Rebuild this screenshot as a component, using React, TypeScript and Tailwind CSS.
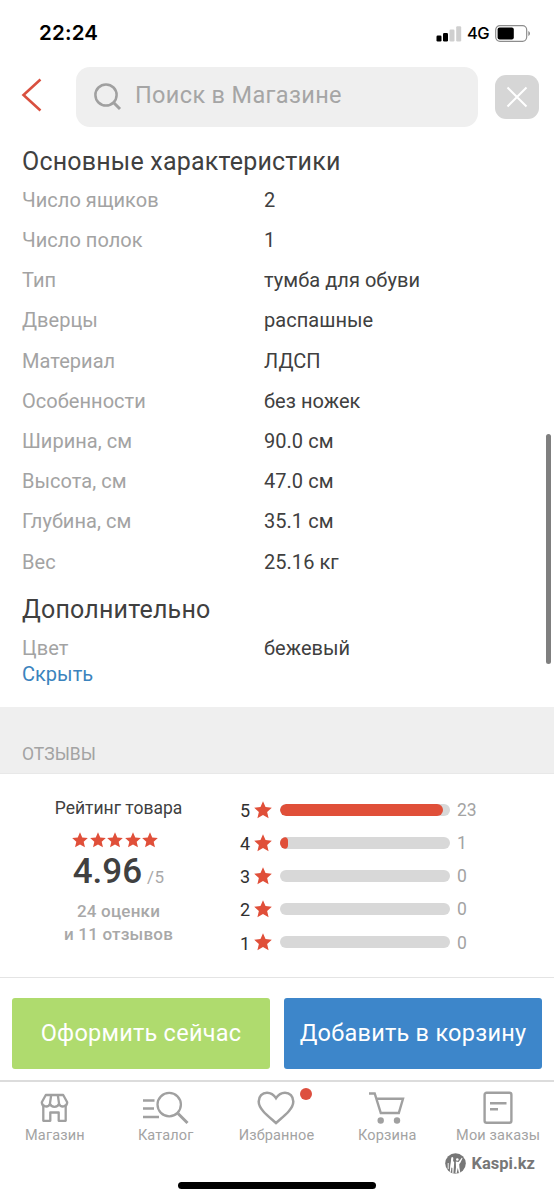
import React from "react";

const specs: [string, string][] = [
  ["Число ящиков", "2"],
  ["Число полок", "1"],
  ["Тип", "тумба для обуви"],
  ["Дверцы", "распашные"],
  ["Материал", "ЛДСП"],
  ["Особенности", "без ножек"],
  ["Ширина, см", "90.0 см"],
  ["Высота, см", "47.0 см"],
  ["Глубина, см", "35.1 см"],
  ["Вес", "25.16 кг"],
];

const ratings = [
  { stars: 5, count: 23, percent: 95.8 },
  { stars: 4, count: 1, percent: 4.8 },
  { stars: 3, count: 0, percent: 0 },
  { stars: 2, count: 0, percent: 0 },
  { stars: 1, count: 0, percent: 0 },
];

function Star({ className }: { className: string }) {
  return (
    <svg viewBox="0 0 20 20" className={className} fill="#e04f39">
      <path d="M10 0.400 12.800 6.800 19.800 7.500 14.600 12.100 16.200 19.200 10 15.500 3.800 19.200 5.400 12.100 0.200 7.500 7.200 6.800Z" />
    </svg>
  );
}

function StatusBar() {
  return (
    <div className="flex h-[67px] shrink-0 items-center justify-between pr-[23px] pl-[39px]">
      <span className="font-['Inter',sans-serif] text-[20.5px] font-semibold tracking-[0.2px] text-black">22:24</span>
      <div className="flex items-center">
        <svg width="26" height="16" viewBox="0 0 26 16">
          <rect x="0.5" y="9.5" width="5" height="6" rx="1.2" fill="#000" />
          <rect x="7" y="7" width="5" height="8.500" rx="1.2" fill="#000" />
          <rect x="13.500" y="3.500" width="5" height="12" rx="1.2" fill="#cfcfcf" />
          <rect x="20.200" y="0.300" width="5" height="15.200" rx="1.2" fill="#cfcfcf" />
        </svg>
        <span className="ml-[5px] w-[28px] font-['Inter',sans-serif] text-[16.5px] font-medium tracking-[-0.5px] text-black">4G</span>
        <svg width="36" height="17" viewBox="0 0 36 17">
          <rect x="0.700" y="0.700" width="31" height="15.600" rx="4.200" fill="none" stroke="#8d8d8d" strokeWidth="1.200" />
          <rect x="2.600" y="2.600" width="16.200" height="11.800" rx="2" fill="#000" />
          <path d="M33.300 6v5c1-.4 1.700-1.400 1.700-2.500s-.7-2.100-1.700-2.500Z" fill="#8d8d8d" />
        </svg>
      </div>
    </div>
  );
}

function SearchHeader() {
  return (
    <div className="flex h-[60px] shrink-0 items-center pr-[15px] pl-[21px]">
      <svg width="21" height="34" viewBox="0 0 21 34" fill="none" stroke="#d9503f" strokeWidth="2.600" className="-mt-[4px]">
        <path d="M19.500 1.500 2.500 17 19.500 32.500" />
      </svg>
      <div className="ml-[34px] flex h-[60px] w-[403px] items-center rounded-[14px] bg-[#efefef] pl-[18px]">
        <svg width="28" height="28" viewBox="0 0 28 28" fill="none" stroke="#a0a0a0" strokeWidth="2.500">
          <circle cx="12" cy="12" r="10.600" />
          <path d="M19.500 19.500 26 26" strokeWidth="3" />
        </svg>
        <span className="-mt-[2px] ml-[13px] text-[23.5px] tracking-[0.35px] whitespace-nowrap text-[#a5a5a5]">Поиск в Магазине</span>
      </div>
      <div className="ml-[17px] flex size-[44px] items-center justify-center rounded-[11px] bg-[#d6d6d6]">
        <svg width="22" height="22" viewBox="0 0 22 22" stroke="#fff" strokeWidth="2">
          <path d="M1.500 1.500 20.500 20.500M20.500 1.500 1.500 20.500" />
        </svg>
      </div>
    </div>
  );
}

function SpecRow({ name, value }: { name: string; value: string }) {
  return (
    <div className="flex h-[40.2px] items-center text-[20px] tracking-[0.04px] whitespace-nowrap">
      <span className="w-[242px] text-[#a3a3a3]">{name}</span>
      <span className="text-[#404040]">{value}</span>
    </div>
  );
}

function Specs() {
  return (
    <section className="flex h-[580px] shrink-0 flex-col pl-[22px] text-[#404040]">
      <h2 className="mt-[17px] h-[36px] text-[25px] leading-[36px] tracking-[0.2px] whitespace-nowrap">Основные характеристики</h2>
      <div className="-mt-[0.2px]">
        {specs.map(([name, value]) => (
          <SpecRow key={name} name={name} value={value} />
        ))}
      </div>
      <h2 className="mt-[10px] h-[36px] text-[25px] leading-[36px] tracking-[0.2px] whitespace-nowrap">Дополнительно</h2>
      <div>
        <SpecRow name="Цвет" value="бежевый" />
      </div>
      <a className="-mt-[7px] text-[20px] leading-[26px] tracking-[0.02px] text-[#3b83bd]">Скрыть</a>
    </section>
  );
}

function Reviews() {
  return (
    <section className="flex h-[204px] shrink-0 border-b border-[#e4e4e4]">
      <div className="flex w-[237px] flex-col items-center">
        <div className="mt-[22px] text-[17.5px] leading-[24px] whitespace-nowrap text-[#404040]">Рейтинг товара</div>
        <div className="mt-[12px] -ml-[7px] flex gap-[1.500px]">
          {[0, 1, 2, 3, 4].map((i) => (
            <Star key={i} className="size-[16px]" />
          ))}
        </div>
        <div className="mt-[4px] flex items-baseline leading-[40px] whitespace-nowrap">
          <span className="text-[35px] font-medium text-[#404040]">4.96</span>
          <span className="ml-[5px] text-[17px] tracking-[0.3px] text-[#a8a8a8]">/5</span>
        </div>
        <div className="mt-[3px] text-center text-[17px] leading-[23px] font-medium tracking-[0.2px] whitespace-nowrap text-[#a8a8a8]">
          24 оценки
          <br />и 11 отзывов
        </div>
      </div>
      <div className="mt-[19px] ml-[3px]">
        {ratings.map(({ stars, count, percent }) => (
          <div key={stars} className="flex h-[33.15px] items-center text-[18px]">
            <span className="mt-[2px] w-[14px] text-[#303030]">{stars}</span>
            <Star className="size-[18px]" />
            <div className="ml-[8px] h-[12px] w-[170px] overflow-hidden rounded-full bg-[#d8d8d8]">
              {percent > 0 && <div className="h-full rounded-full bg-[#e04f39]" style={{ width: `${percent}%` }} />}
            </div>
            <span className="mt-px ml-[7px] text-[17.5px] text-[#a3a3a3]">{count}</span>
          </div>
        ))}
      </div>
    </section>
  );
}

function StoreIcon() {
  return (
    <svg width="29" height="30" viewBox="0 0 29 30" fill="none" stroke="#a0a0a0" strokeWidth="2.300" strokeLinejoin="round">
      <path d="M5.800 2h17.400l4 7.300c0 5-6.700 5.500-8.100 1.500-1.600 4-7.600 4-9.200 0-1.400 4-8.100 3.500-8.100-1.500ZM11.200 2 9.900 10.800M17.800 2 19.100 10.800" />
      <path d="M3.300 13v14.800h7v-8.300h8.400v8.300h7V13" />
    </svg>
  );
}

function CatalogIcon() {
  return (
    <svg width="46" height="34" viewBox="0 0 46 34" fill="none" stroke="#a0a0a0" strokeWidth="2.300">
      <path d="M0 9.500h11.500M0 17.500h11M0 26h16" />
      <circle cx="26.200" cy="13.600" r="11.700" />
      <path d="M35 22.500 44.500 32" strokeWidth="3" />
    </svg>
  );
}

function HeartIcon() {
  return (
    <svg width="38" height="34" viewBox="0 0 38 34" fill="none" stroke="#a0a0a0" strokeWidth="2.500">
      <path d="M19 32C13 26.500 1.700 18.800 1.700 10.500 1.700 5.500 5.300 1.700 10 1.700c3.700 0 6.800 2 9 5.500 2.200-3.500 5.300-5.500 9-5.500 4.700 0 8.300 3.800 8.300 8.800C36.300 18.800 25 26.500 19 32Z" />
    </svg>
  );
}

function CartIcon() {
  return (
    <svg width="36" height="34" viewBox="0 0 36 34" fill="none" stroke="#a0a0a0" strokeWidth="2.400">
      <path d="M0 2.500h5.700l6.100 19.500h18L34 7.800H7.400" />
      <circle cx="11.700" cy="29.500" r="3.200" fill="#a0a0a0" stroke="none" />
      <circle cx="28" cy="29.500" r="3.200" fill="#a0a0a0" stroke="none" />
    </svg>
  );
}

function OrdersIcon() {
  return (
    <svg width="30" height="34" viewBox="0 0 30 34" fill="none" stroke="#a0a0a0" strokeWidth="2.400">
      <rect x="1.600" y="1.800" width="26.800" height="30" rx="2" />
      <path d="M7 12.300h16.500M7 18.200h8" />
    </svg>
  );
}

const tabs = [
  { label: "Магазин", icon: <StoreIcon /> },
  { label: "Каталог", icon: <CatalogIcon /> },
  { label: "Избранное", icon: <HeartIcon />, badge: true },
  { label: "Корзина", icon: <CartIcon /> },
  { label: "Мои заказы", icon: <OrdersIcon /> },
];

function KaspiLogo() {
  return (
    <svg width="21" height="21" viewBox="0 0 21 21">
      <circle cx="10.500" cy="10.500" r="10.300" fill="#777" />
      <path
        d="M6.600 4.200c1-.6 1.900.3 1.700 1.500l-.2 2 1.100 1.700-.3 4.100-.5 6.500H7.300l.1-5-1-.6-.5 4.600-1-.6.300-5.500.7-4.500.2-2.700Z"
        fill="#fff"
      />
      <path d="M10.800 8.500 13.500 9l3.300-4.200.7.400-2 4.300-1.300 1.800.2 3 .9 5.400-1.400.4-1.100-5-1.200 5.300-1.200-.2.600-6Z" fill="#fff" />
      <circle cx="12.300" cy="6.500" r="1.300" fill="#fff" />
      <path d="M3.200 10v6" stroke="#fff" strokeWidth="0.900" />
    </svg>
  );
}

export default function App() {
  return (
    <main className="relative flex h-[1200px] w-[554px] flex-col overflow-hidden bg-white font-['Roboto',sans-serif]">
      <StatusBar />
      <SearchHeader />
      <Specs />
      <div className="h-[67px] shrink-0 border-b border-[#e8e8e8] bg-[#efefef] pt-[34px] pl-[22px] text-[17.5px] leading-[26px] text-[#a3a3a3]">ОТЗЫВЫ</div>
      <Reviews />
      <div className="grid h-[102px] shrink-0 grid-cols-2 gap-[14px] px-[12px] pt-[20px] text-[23.5px] tracking-[0.25px] whitespace-nowrap text-white">
        <button className="flex h-[71px] items-center justify-center rounded-[3px] bg-[#afdb6e]">Оформить сейчас</button>
        <button className="flex h-[71px] items-center justify-center rounded-[3px] bg-[#3d86ca]">Добавить в корзину</button>
      </div>
      <nav className="grid h-[65px] shrink-0 grid-cols-5 border-t-2 border-[#dcdcdc] text-[14.5px] text-[#a3a3a3]">
        {tabs.map(({ label, icon, badge }) => (
          <div key={label} className="relative flex flex-col items-center pt-[9px] pr-px whitespace-nowrap">
            <div className="flex h-[34px] items-center">{icon}</div>
            <span className="mt-[1px] leading-[20px] tracking-[0.15px]">{label}</span>
            {badge && <i className="absolute top-[6px] right-[20px] size-[12px] rounded-full bg-[#dd4f3f]" />}
          </div>
        ))}
      </nav>
      <div className="flex h-[37px] shrink-0 items-center justify-end pr-[19px]">
        <KaspiLogo />
        <span className="mt-[2px] ml-[6px] text-[16.5px] font-bold text-[#777]">Kaspi.kz</span>
      </div>
      <div className="mx-auto h-[7px] w-[198px] shrink-0 rounded-full bg-black" />
      <div className="absolute top-[434px] right-[3px] h-[230px] w-[5px] rounded-full bg-[#7f7f7f]" />
    </main>
  );
}
